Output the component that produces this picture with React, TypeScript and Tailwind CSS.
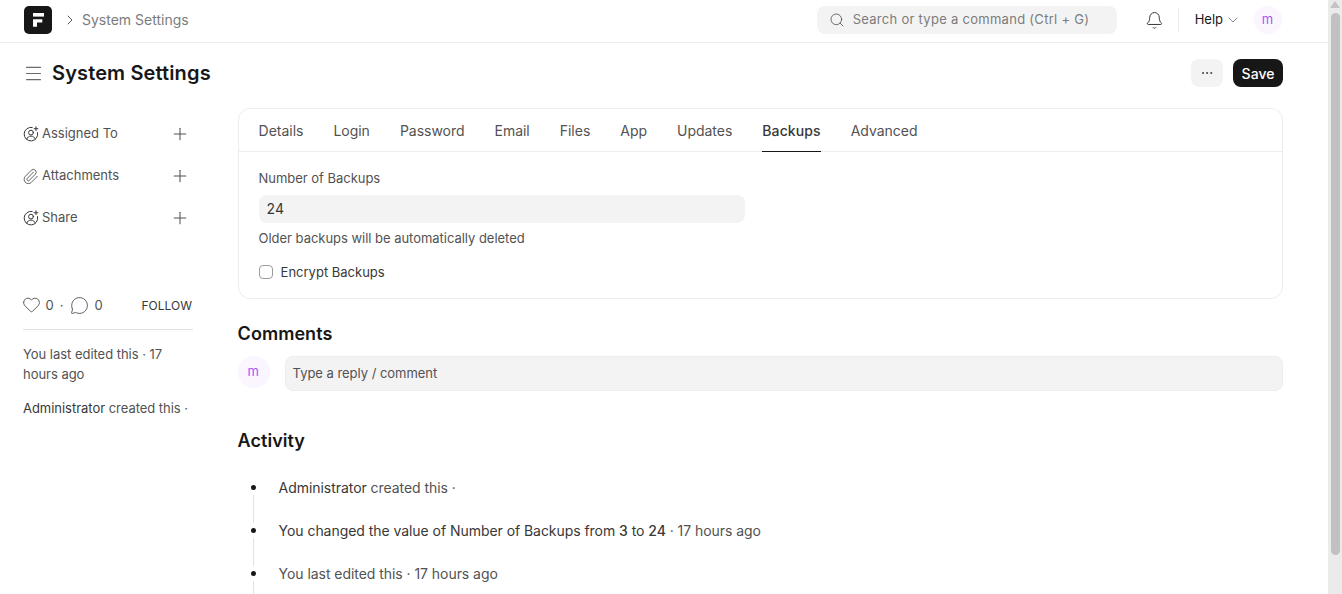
import { Bell, Search, ChevronDown, ChevronRight, Plus, Paperclip, Heart, MessageCircle, Ellipsis, Menu } from "lucide-react";

function UserPlus() {
  return (
    <svg width="16" height="16" viewBox="0 0 16 16" fill="none" stroke="#383838" strokeWidth="1" strokeLinecap="round" className="shrink-0">
      <path d="M9.2 1.4A6.8 6.8 0 1 0 14.6 6.6" />
      <circle cx="8" cy="6.6" r="2.4" />
      <path d="M3.7 13.2c.7-2 2.3-3.1 4.3-3.1s3.6 1.1 4.3 3.1" />
      <path d="M13 .8v3.8M11.1 2.7h3.8" />
    </svg>
  );
}

function SideRow({ icon, label }: { icon: React.ReactNode; label: string }) {
  return (
    <div className="flex items-center h-[42px]">
      <span className="w-[19px] flex">{icon}</span>
      <span className="flex-1 text-[13px] text-[#525252]">{label}</span>
      <Plus size={20} strokeWidth={1.25} className="text-[#525252] mr-[3px] mb-[1px]" />
    </div>
  );
}

function Avatar({ size, text }: { size: string; text: string }) {
  return <div className={`${size} rounded-full bg-[#faf5ff] text-[#a855f7] flex items-center justify-center pr-[1px]`}>{text}</div>;
}

const tabs = ["Details", "Login", "Password", "Email", "Files", "App", "Updates", "Backups", "Advanced"];

function ActivityRow({ children, line = true }: { children: React.ReactNode; line?: boolean }) {
  return (
    <div className="relative h-[43px] flex items-center pl-[41px] text-[14px] tracking-[-0.05px] text-[#525252]">
      <span className="absolute left-[13px] top-[19px] w-[5px] h-[5px] rounded-full bg-[#171717]" />
      {line && <span className="absolute left-[15px] top-[29px] w-px h-[28px] bg-[#e2e2e2]" />}
      <span>{children}</span>
    </div>
  );
}

export default function App() {
  return (
    <div className="h-[594px] overflow-hidden flex bg-white font-['Inter',sans-serif]">
      <div className="flex-1 min-w-0 flex flex-col">
        <header className="h-[43px] shrink-0 border-b border-[#ededed] flex items-center pl-6 pr-[46px] pb-[2px]">
          <div className="w-7 h-7 rounded-[5px] bg-[#171717] flex items-center justify-center">
            <svg width="14" height="14" viewBox="0 0 14 14" fill="#fff">
              <path d="M2 0h11v3.6H2z" />
              <path d="M2 6.3h9.3v3.3H6v4.1H2z" />
            </svg>
          </div>
          <ChevronRight size={16} strokeWidth={1.25} className="ml-[10px] text-[#383838]" />
          <span className="ml-[4px] mb-[2px] text-[14px] text-[#7c7c7c]">System Settings</span>
          <div className="ml-auto w-[300px] h-[28px] rounded-lg bg-[#f3f3f3] flex items-center pl-[12px]">
            <Search size={16} strokeWidth={1.25} className="text-[#525252]" />
            <span className="ml-[8px] text-[13px] tracking-[0.28px] text-[#7c7c7c]">Search or type a command (Ctrl + G)</span>
          </div>
          <Bell size={19} strokeWidth={1.25} className="ml-[28.5px] text-[#383838]" />
          <div className="ml-[13.5px] w-px h-6 bg-[#ededed]" />
          <span className="ml-4 text-[13px] text-[#171717]">Help</span>
          <ChevronDown size={16} strokeWidth={1} className="ml-[2px] text-[#525252]" />
          <div className="ml-[13px]"><Avatar size="w-7 h-7 text-[13px]" text="m" /></div>
        </header>

        <div className="h-[60px] shrink-0 flex items-center pl-6 pr-[45px]">
          <Menu size={21} strokeWidth={1.15} className="text-[#6b6b6b] -ml-[1.5px]" />
          <h1 className="ml-[8.5px] text-[20px] tracking-[0.13px] font-semibold text-[#171717]">System Settings</h1>
          <div className="ml-auto w-8 h-7 rounded-lg bg-[#f3f3f3] flex items-center justify-center">
            <Ellipsis size={14} strokeWidth={1.5} className="text-[#383838]" />
          </div>
          <button className="ml-[10px] w-[50px] h-7 rounded-lg bg-[#171717] text-white text-[14px] font-medium">Save</button>
        </div>

        <div className="flex-1 flex pl-[23px] pr-[45px] min-h-0">
          <aside className="w-[170px] shrink-0 mr-[44.6px]">
            <div className="mt-[10px]">
              <SideRow icon={<UserPlus />} label="Assigned To" />
              <SideRow icon={<Paperclip size={17} strokeWidth={1.1} className="text-[#383838] -ml-[1px]" />} label="Attachments" />
              <SideRow icon={<UserPlus />} label="Share" />
            </div>
            <div className="mt-[59px] pb-[15px] border-b border-[#e2e2e2] flex items-center text-[13px] text-[#525252] h-[32px]">
              <Heart size={19} strokeWidth={1} className="text-[#383838] -ml-[1.5px] mb-[3px]" />
              <span className="ml-[5px]">0</span>
              <span className="ml-[6px]">·</span>
              <MessageCircle size={19} strokeWidth={1} className="ml-[6.5px] mb-[2px] text-[#383838]" />
              <span className="ml-[5.5px]">0</span>
              <span className="ml-auto mr-[1px] text-[12px] text-[#383838]">FOLLOW</span>
            </div>
            <p className="mt-[14px] text-[13px] leading-[20px] tracking-[-0.03px] text-[#525252]">You last edited this · 17 hours ago</p>
            <p className="mt-[14px] text-[13px] leading-[20px] tracking-[-0.03px] text-[#525252]"><span className="text-[#383838]">Administrator</span> created this ·</p>
          </aside>

          <main className="flex-1 min-w-0">
            <section className="mt-[5px] h-[191px] rounded-xl border border-[#ededed]">
              <nav className="h-[43px] border-b border-[#ededed] flex pl-5 gap-[30px] text-[14px] tracking-[-0.02px] text-[#525252]">
                {tabs.map((t) => (
                  <span key={t} className={t === "Backups" ? "h-[43px] flex items-center font-medium tracking-[0.1px] text-[#383838] border-b border-[#171717]" : "h-[43px] flex items-center"}>{t}</span>
                ))}
              </nav>
              <div className="pl-5">
                <div className="mt-[18px] text-[13px] leading-[16px] tracking-[-0.03px] text-[#525252]">Number of Backups</div>
                <div className="mt-[9px] w-[486px] h-7 rounded-lg bg-[#f3f3f3] flex items-center pl-2 pb-[1px] text-[14px] text-[#383838]">24</div>
                <div className="mt-[7px] text-[13px] leading-[16px] tracking-[-0.03px] text-[#525252]">Older backups will be automatically deleted</div>
                <div className="mt-[18px] flex items-center">
                  <span className="w-[14px] h-[14px] rounded-[4px] border border-[#9b9b9b] bg-white" />
                  <span className="ml-2 text-[13px] leading-[16px] text-[#383838]">Encrypt Backups</span>
                </div>
              </div>
            </section>

            <h2 className="mt-[24px] text-[18px] tracking-[0.05px] leading-[22px] font-semibold text-[#171717]">Comments</h2>
            <div className="mt-[11px] flex">
              <Avatar size="w-8 h-8 text-[13px] shrink-0" text="m" />
              <div className="ml-[15px] flex-1 h-[35px] rounded-lg bg-[#f3f3f3] border border-[#ededed] flex items-center pl-[7px] text-[13px] tracking-[-0.03px] text-[#525252]">Type a reply / comment</div>
            </div>

            <h2 className="mt-[39px] text-[18px] tracking-[0.05px] leading-[22px] font-semibold text-[#171717]">Activity</h2>
            <div className="mt-[14px]">
              <ActivityRow><span className="text-[#383838]">Administrator</span> created this ·</ActivityRow>
              <ActivityRow><span className="text-[#383838]">You changed the value of Number of Backups from <span className="font-medium">3</span> to <span className="font-medium">24</span></span> · 17 hours ago</ActivityRow>
              <ActivityRow>You last edited this · 17 hours ago</ActivityRow>
            </div>
          </main>
        </div>
      </div>
      <div className="relative w-[14px] shrink-0 bg-[#ebebeb] flex flex-col items-center">
        <svg width="10" height="7" viewBox="0 0 10 7" className="absolute top-[1px] left-[2px]" fill="#c4c4c4"><path d="M5 0l5 7H0z" /></svg>
        <div className="mt-[13px] w-[9px] h-[542px] rounded-[5px] bg-[#c1c1c1] ml-[1px]" />
      </div>
    </div>
  );
}
